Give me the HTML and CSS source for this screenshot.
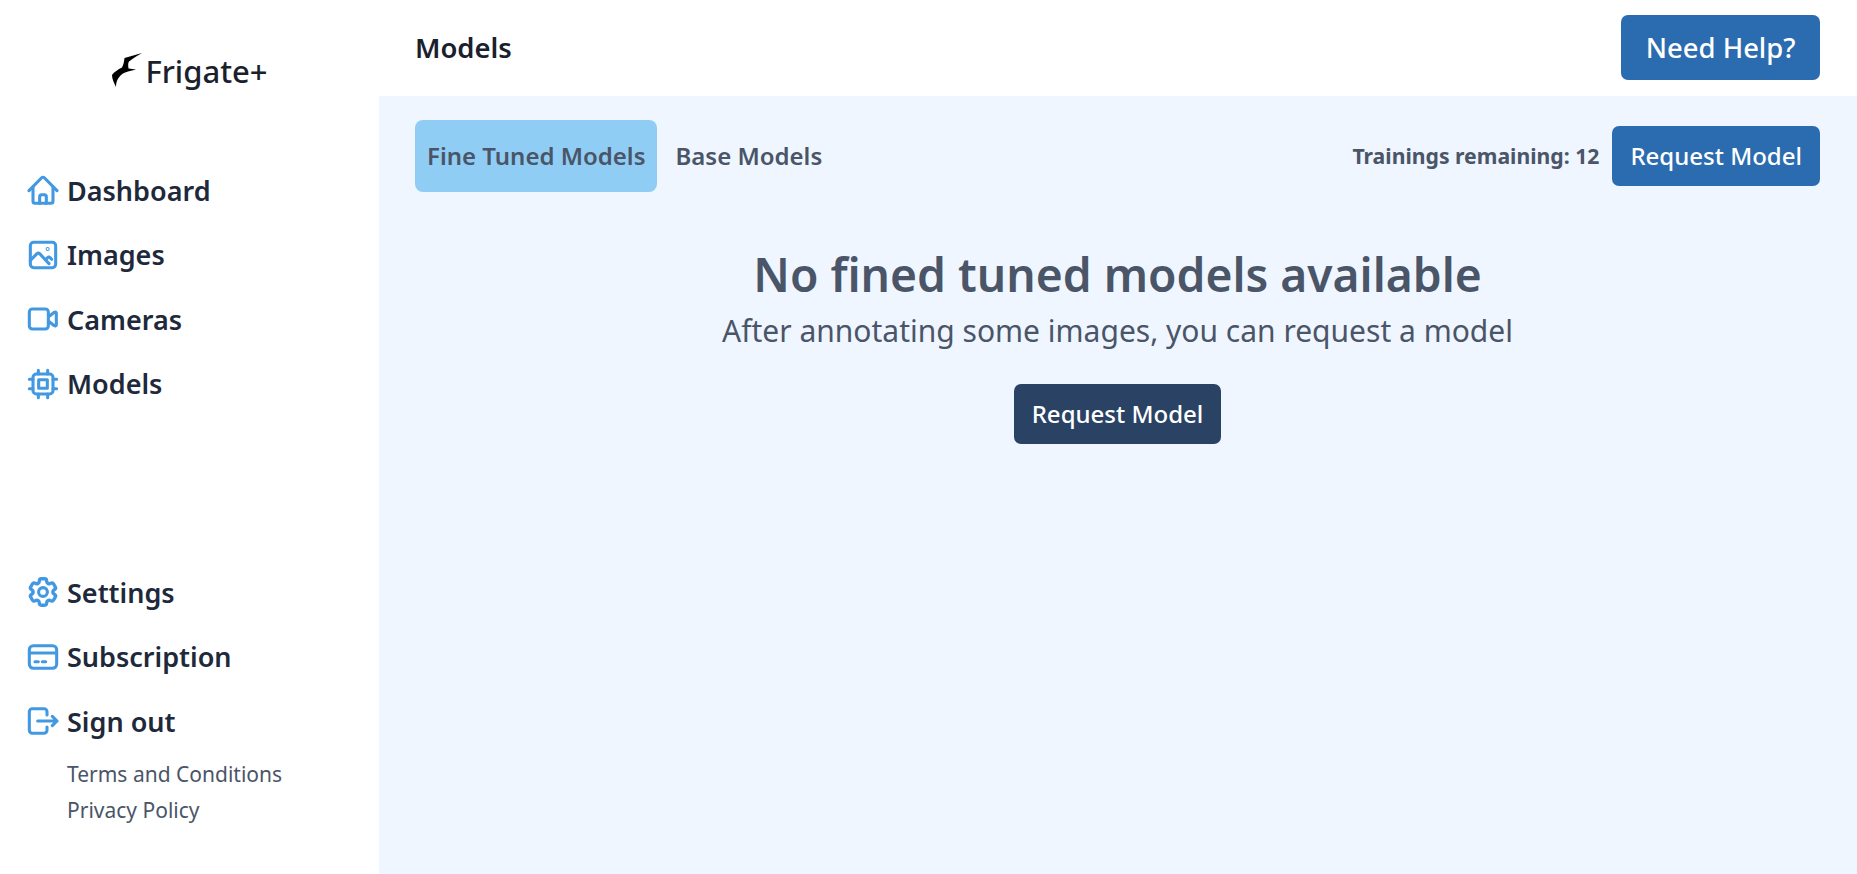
FILE: index.html
```html
<!DOCTYPE html>
<html lang="en">
<head>
    <meta charset="UTF-8">
    <title>Frigate+ Models</title>
    <link rel="stylesheet" href="styles.css">
</head>
<body>
    <div class="layout">
        <aside class="sidebar">
            <div class="logo">
                <svg class="logo-bird" viewBox="0 1 32 36"><path d="M31 1 L13.500 6 C13 10 12.500 12.500 11 15.500 C7 17.500 3 20 1 23 C1 27 3 31 5 35 C5 31 6 28 7.500 26 C9.500 22.500 13 20.500 17 19.500 L25 17.500 L17.500 16.500 C17 13 17 11 18 9.500 C22 6.500 26.500 3.500 31 1 Z"/></svg>
                <span>Frigate+</span>
            </div>
            <nav class="nav-main">
                <a class="nav-item">
                    <svg class="nav-icon" viewBox="0 0 24 24"><path d="M1.500 12.500 L11 2.800 a1.400 1.400 0 0 1 2 0 L22.500 12.500"/><path d="M4.500 10 V20.500 a1.500 1.500 0 0 0 1.500 1.500 H18 a1.500 1.500 0 0 0 1.500 -1.500 V10"/><path d="M9.500 22 V17 a1.500 1.500 0 0 1 1.500 -1.500 H13 a1.500 1.500 0 0 1 1.500 1.500 V22"/></svg>
                    Dashboard
                </a>
                <a class="nav-item">
                    <svg class="nav-icon" viewBox="0 0 24 24"><rect x="2.500" y="2.500" width="19" height="19" rx="2.500"/><path d="M2.500 16 L7.500 11 a1.500 1.500 0 0 1 2 0 L16.500 18.500"/><path d="M14 15.500 L15.500 14 a1.200 1.200 0 0 1 1.800 0 L18.500 15.200"/><circle cx="15.500" cy="7.500" r="0.400"/></svg>
                    Images
                </a>
                <a class="nav-item">
                    <svg class="nav-icon" viewBox="0 0 24 24"><path d="M16 10.500l4.500-3.500a.9.9 0 011.500.7v8.600a.9.9 0 01-1.500.7L16 13.500M4 19.500h9.750a2.250 2.250 0 002.250-2.250V6.750a2.250 2.250 0 00-2.250-2.250H4A2.250 2.250 0 001.750 6.750v10.500A2.250 2.250 0 004 19.500z"/></svg>
                    Cameras
                </a>
                <a class="nav-item">
                    <svg class="nav-icon" viewBox="0 0 24 24"><path d="M8.500 1.750v2.750M15.500 1.750v2.750M8.500 19.500v2.750M15.500 19.500v2.750M1.750 8.500h2.750M1.750 15.500h2.750M19.500 8.500h2.750M19.500 15.500h2.750"/><rect x="4.500" y="4.500" width="15" height="15" rx="2.500"/><rect x="8.750" y="8.750" width="6.500" height="6.500"/></svg>
                    Models
                </a>
            </nav>
            <nav class="nav-bottom">
                <a class="nav-item">
                    <svg class="nav-icon" viewBox="0 0 24 24"><path d="M9.594 3.940c.090-.542.560-.940 1.110-.940h2.593c.550 0 1.020.398 1.110.940l.213 1.281c.063.374.313.686.645.870.074.040.147.083.220.127.324.196.720.257 1.075.124l1.217-.456a1.125 1.125 0 011.370.490l1.296 2.247a1.125 1.125 0 01-.260 1.431l-1.003.827c-.293.240-.438.613-.431.992a6.759 6.759 0 010 .255c-.007.378.138.750.430.990l1.005.828c.424.350.534.954.260 1.430l-1.298 2.247a1.125 1.125 0 01-1.369.491l-1.217-.456c-.355-.133-.750-.072-1.076.124a6.570 6.570 0 01-.220.128c-.331.183-.581.495-.644.869l-.213 1.280c-.090.543-.560.941-1.110.941h-2.594c-.550 0-1.020-.398-1.110-.940l-.213-1.281c-.062-.374-.312-.686-.644-.870a6.520 6.520 0 01-.220-.127c-.325-.196-.720-.257-1.076-.124l-1.217.456a1.125 1.125 0 01-1.369-.490l-1.297-2.247a1.125 1.125 0 01.260-1.431l1.004-.827c.292-.240.437-.613.430-.992a6.932 6.932 0 010-.255c.007-.378-.138-.750-.430-.990l-1.004-.828a1.125 1.125 0 01-.260-1.430l1.297-2.247a1.125 1.125 0 011.370-.491l1.216.456c.356.133.751.072 1.076-.124.072-.044.146-.087.220-.128.332-.183.582-.495.644-.869l.214-1.281z" transform="translate(-1.200 -1.200) scale(1.100)"/><circle cx="12" cy="12" r="3.300"/></svg>
                    Settings
                </a>
                <a class="nav-item">
                    <svg class="nav-icon" viewBox="0 0 24 24"><rect x="1.750" y="3.500" width="20.500" height="17" rx="3"/><path d="M1.750 9h20.500M6 15.500h2.500M11.500 15.500h2.500"/></svg>
                    Subscription
                </a>
                <a class="nav-item">
                    <svg class="nav-icon" viewBox="0 0 24 24"><path d="M15 7.500V5A2.250 2.250 0 0012.750 2.750H4A2.250 2.250 0 001.750 5v14A2.250 2.250 0 004 21.250h8.750A2.250 2.250 0 0015 19v-2.500"/><path d="M8 12h14.500m-3.500-3.500l3.500 3.500-3.500 3.500"/></svg>
                    Sign out
                </a>
                <div class="nav-links">
                    <a class="nav-link">Terms and Conditions</a>
                    <a class="nav-link">Privacy Policy</a>
                </div>
            </nav>
        </aside>
        <div class="main">
            <header class="topbar">
                <h1>Models</h1>
                <button class="btn btn-help">Need Help?</button>
            </header>
            <main class="content">
                <div class="toolbar">
                    <div class="tabs">
                        <button class="tab active">Fine Tuned Models</button>
                        <button class="tab">Base Models</button>
                    </div>
                    <div class="toolbar-right">
                        <span class="remaining">Trainings remaining: 12</span>
                        <button class="btn">Request Model</button>
                    </div>
                </div>
                <div class="empty">
                    <h2>No fined tuned models available</h2>
                    <p>After annotating some images, you can request a model</p>
                    <button class="btn btn-dark">Request Model</button>
                </div>
            </main>
        </div>
    </div>
</body>
</html>
```

FILE: styles.css
```css
* {
    box-sizing: border-box;
}

body {
    margin: 0;
    font-family: "Noto Sans", sans-serif;
    background-color: #fff;
    color: #1a202c;
}

.layout {
    display: flex;
    height: 874px;
}

/* Sidebar */
.sidebar {
    width: 379px;
    flex-shrink: 0;
    display: flex;
    flex-direction: column;
    padding: 0 27px;
}

.logo {
    display: flex;
    align-items: center;
    justify-content: center;
    gap: 2px;
    height: 36px;
    margin-top: 53px;
    font-size: 31px;
    font-weight: 500;
}

.logo span {
    margin-bottom: 1px;
}

.logo-bird {
    width: 32px;
    height: 36px;
    fill: #000;
}

.nav-main {
    margin-top: 69px;
}

.nav-bottom {
    margin-top: 144px;
}

.nav-item {
    display: flex;
    align-items: center;
    gap: 8px;
    height: 64.500px;
    font-size: 27px;
    font-weight: 600;
    color: #1e293b;
}

.nav-icon {
    width: 32px;
    height: 32px;
    flex-shrink: 0;
    fill: none;
    stroke: #4299e1;
    stroke-width: 2.300;
    stroke-linecap: round;
    stroke-linejoin: round;
}

.nav-links {
    margin-top: 2px;
}

.nav-link {
    display: block;
    margin-left: 40px;
    height: 36.500px;
    line-height: 36px;
    font-size: 21px;
    color: #4a5568;
}

/* Top bar */
.main {
    flex: 1;
    display: flex;
    flex-direction: column;
}

.topbar {
    height: 96px;
    display: flex;
    align-items: center;
    justify-content: space-between;
    padding: 0 37px 0 36px;
}

.topbar h1 {
    margin: 0 0 2px;
    font-size: 27.400px;
    font-weight: 600;
}

.btn {
    height: 60px;
    padding: 0 18px 1px;
    border: none;
    border-radius: 7px;
    background-color: #2b6cb0;
    color: #fff;
    font-family: inherit;
    font-size: 24px;
    font-weight: 500;
}

.btn-help {
    height: 65px;
    margin-bottom: 1px;
    padding: 0 24.500px;
    font-size: 27.400px;
}

.btn-dark {
    background-color: #2a4365;
}

/* Content */
.content {
    flex: 1;
    background-color: #eff6ff;
    padding: 24px 37px 0 36px;
}

.toolbar {
    display: flex;
    align-items: center;
    justify-content: space-between;
}

.tabs {
    display: flex;
    gap: 6px;
}

.tab {
    height: 72px;
    padding: 0 12px 2px;
    border: none;
    border-radius: 8px;
    background: none;
    color: #4a5568;
    font-family: inherit;
    font-size: 24px;
    font-weight: 600;
}

.tab.active {
    background-color: #90cdf4;
}

.toolbar-right {
    display: flex;
    align-items: center;
    gap: 13px;
}

.remaining {
    margin-bottom: 2px;
    font-size: 21.200px;
    font-weight: 700;
    color: #4a5568;
}

.empty {
    margin-top: 49px;
    text-align: center;
    color: #4a5568;
}

.empty h2 {
    margin: 0;
    font-size: 46.200px;
    font-weight: 600;
    line-height: 67px;
}

.empty p {
    margin: 0 0 30px;
    font-size: 30px;
    line-height: 46px;
}
```
